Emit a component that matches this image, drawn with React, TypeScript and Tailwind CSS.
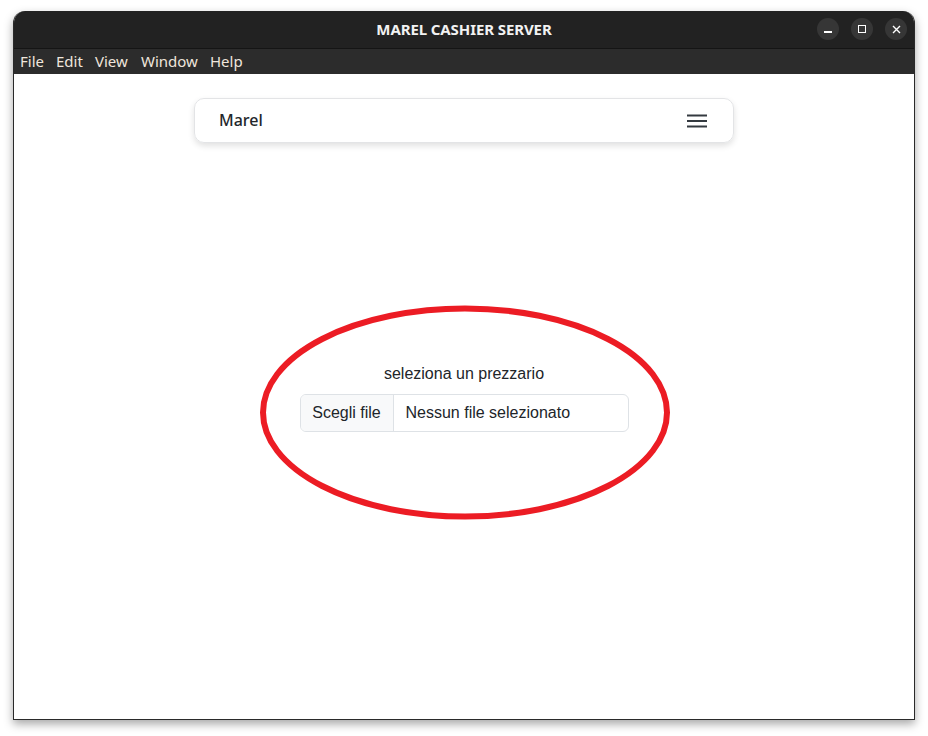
const menus = [
  { label: 'File', w: 'w-[36px]' },
  { label: 'Edit', w: 'w-[39px]' },
  { label: 'View', w: 'w-[46px]' },
  { label: 'Window', w: 'w-[69px]' },
  { label: 'Help', w: 'w-[40px]' },
];

export default function App() {
  return (
    <div className="w-[928px] h-[736px] bg-white pt-[11px] pl-[13px] relative overflow-hidden">
      <div className="w-[902px] h-[709px] rounded-t-[12px] flex flex-col overflow-hidden border-x border-b border-[#2a2a2a] shadow-[0_4px_10px_rgba(0,0,0,0.35)]">
        {/* title bar */}
        <div className="h-[38px] bg-[#222222] relative flex items-center justify-center border-b border-[#151515]">
          <span className="text-[15px] font-bold text-[#f2f2f2] tracking-[-0.1px]" style={{ fontFamily: '"Noto Sans", sans-serif' }}>
            MAREL CASHIER SERVER
          </span>
          <div className="absolute right-[7px] top-[7px] flex gap-[12px]">
            <div className="w-[22px] h-[22px] rounded-full bg-[#363636] flex items-center justify-center">
              <div className="w-[8px] h-[1.5px] bg-white mt-[6px]" />
            </div>
            <div className="w-[22px] h-[22px] rounded-full bg-[#363636] flex items-center justify-center">
              <div className="w-[8px] h-[8px] border border-white" />
            </div>
            <div className="w-[22px] h-[22px] rounded-full bg-[#363636] flex items-center justify-center">
              <svg width="9" height="9" viewBox="0 0 9 9">
                <path d="M1 1 L8 8 M8 1 L1 8" stroke="white" strokeWidth="1.4" />
              </svg>
            </div>
          </div>
        </div>
        {/* menu bar */}
        <div className="h-[25px] bg-[#2c2c2c] flex items-center pl-[6px] text-[15px] text-[#efe6dc]" style={{ fontFamily: '"Noto Sans", sans-serif' }}>
          {menus.map(m => (
            <span key={m.label} className={`${m.w} leading-none`}>{m.label}</span>
          ))}
        </div>
        {/* content */}
        <div className="flex-1 bg-white flex flex-col items-center pt-[24px]">
          <div className="w-[540px] h-[45px] rounded-[10px] border border-[#e3e4e6] shadow-[0_3px_6px_rgba(0,0,0,0.12)] flex items-center justify-between pl-[24px] pr-[26px]">
            <span className="text-[16px] font-medium text-[#23272b] -mt-[2px]" style={{ fontFamily: '"Noto Sans", sans-serif' }}>Marel</span>
            <svg width="20" height="14" viewBox="0 0 20 14" className="mt-[1px]">
              <path d="M0 1.5 H20 M0 7 H20 M0 12.5 H20" stroke="#343a40" strokeWidth="2" />
            </svg>
          </div>
          <div className="mt-[219px] flex flex-col items-center" style={{ fontFamily: '"Liberation Sans", Arial, sans-serif' }}>
            <div className="text-[16px] text-[#212529] leading-[24px]">seleziona un prezzario</div>
            <div className="mt-[8px] w-[329px] h-[38px] rounded-[6px] border border-[#dee2e6] flex overflow-hidden text-[16px] text-[#212529]">
              <div className="w-[93px] bg-[#f8f9fa] border-r border-[#dee2e6] flex items-center justify-center">Scegli file</div>
              <div className="flex items-center pl-[12px]">Nessun file selezionato</div>
            </div>
          </div>
        </div>
      </div>
      {/* red annotation ellipse */}
      <svg className="absolute left-0 top-0 pointer-events-none" width="928" height="736">
        <ellipse cx="465" cy="412.5" rx="202" ry="104" fill="none" stroke="#ec1c24" strokeWidth="6" />
      </svg>
    </div>
  );
}
